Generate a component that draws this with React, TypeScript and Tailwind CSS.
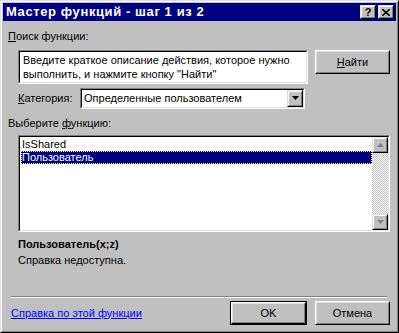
import React from 'react';

const font = { fontFamily: '"Liberation Sans", Arial, sans-serif' };

const Btn = ({ children, def = false, w = 'w-[75px]' }: { children: React.ReactNode; def?: boolean; w?: string }) => (
  <div className={`${w} h-[24px] ${def ? 'border border-black' : ''}`}>
    <div className="w-full h-full border border-t-white border-l-white border-r-black border-b-black bg-[#c0c0c0]">
      <div className="w-full h-full border border-t-[#dfdfdf] border-l-[#dfdfdf] border-r-[#808080] border-b-[#808080] flex items-center justify-center text-[11px] text-black">
        {children}
      </div>
    </div>
  </div>
);

const Sunken = ({ className, children }: { className: string; children?: React.ReactNode }) => (
  <div className={`${className} border border-t-[#808080] border-l-[#808080] border-r-white border-b-white`}>
    <div className="w-full h-full border border-t-black border-l-black border-r-[#dfdfdf] border-b-[#dfdfdf] bg-white overflow-hidden">
      {children}
    </div>
  </div>
);

const Raised = ({ className, children }: { className: string; children?: React.ReactNode }) => (
  <div className={`${className} border border-t-[#dfdfdf] border-l-[#dfdfdf] border-r-black border-b-black bg-[#c0c0c0]`}>
    <div className="w-full h-full border border-t-white border-l-white border-r-[#808080] border-b-[#808080] flex items-center justify-center">
      {children}
    </div>
  </div>
);

const Arrow = ({ up = false, color = 'black' }: { up?: boolean; color?: string }) => (
  <svg width="7" height="4" viewBox="0 0 7 4">
    <path d={up ? 'M3.5 0 L7 4 L0 4 Z' : 'M0 0 L7 0 L3.5 4 Z'} fill={color} />
  </svg>
);

export default function App() {
  return (
    <div style={font} className="w-[399px] h-[333px] bg-[#c0c0c0] border border-t-[#dfdfdf] border-l-[#dfdfdf] border-r-black border-b-black">
      <div className="w-full h-full border border-t-white border-l-white border-r-[#808080] border-b-[#808080] p-px flex flex-col">
        {/* title bar */}
        <div className="h-[18px] bg-[#000080] flex items-center pl-[3px] pr-[2px]">
          <span className="text-white font-bold text-[13px] tracking-[0.6px] flex-1">Мастер функций - шаг 1 из 2</span>
          <Raised className="w-[16px] h-[14px]">
            <span className="text-[11px] font-bold leading-none text-black">?</span>
          </Raised>
          <div className="w-[2px]" />
          <Raised className="w-[16px] h-[14px]">
            <svg width="8" height="7" viewBox="0 0 8 7">
              <path d="M0 0 L8 7 M8 0 L0 7" stroke="black" strokeWidth="1.6" />
            </svg>
          </Raised>
        </div>

        <div className="flex-1 flex flex-col text-[11px] text-black pl-[5px] pr-[6px]">
          <div className="mt-[9px] h-[13px] leading-[13px]">
            <span className="underline">П</span>оиск функции:
          </div>
          <div className="mt-[7px] flex pl-[10px]">
            <Sunken className="w-[290px] h-[34px]">
              <div className="px-[3px] pt-[1px] leading-[14px]">
                Введите краткое описание действия, которое нужно выполнить, и нажмите кнопку "Найти"
              </div>
            </Sunken>
            <div className="ml-[7px]">
              <Btn>
                <span className="underline">Н</span>айти
              </Btn>
            </div>
          </div>
          <div className="mt-[3px] flex items-center pl-[10px] h-[22px]">
            <span className="w-[62px]">
              <span className="underline">К</span>атегория:
            </span>
            <Sunken className="w-[225px] h-[21px]">
              <div className="flex h-full items-center">
                <span className="flex-1 pl-[2px]">Определенные пользователем</span>
                <Raised className="w-[16px] h-[17px]">
                  <Arrow />
                </Raised>
              </div>
            </Sunken>
          </div>
          <div className="mt-[8px] h-[13px] leading-[13px]">
            Выберите <span className="underline">ф</span>ункцию:
          </div>
          <div className="mt-[5px] pl-[10px]">
            <Sunken className="w-[372px] h-[97px]">
              <div className="flex h-full">
                <div className="flex-1 pl-px pt-[1px]">
                  <div className="h-[13px] leading-[13px] pl-px">IsShared</div>
                  <div className="h-[13px] leading-[13px] pl-px bg-[#000080] text-white outline-1 outline-dotted outline-[#ffff80] -outline-offset-1">
                    Пользователь
                  </div>
                </div>
                <div className="w-[16px] h-full flex flex-col bg-[repeating-conic-gradient(#c0c0c0_0%_25%,#ffffff_0%_50%)] bg-[length:2px_2px]">
                  <Raised className="w-[16px] h-[16px]">
                    <Arrow up color="#808080" />
                  </Raised>
                  <div className="flex-1" />
                  <Raised className="w-[16px] h-[16px]">
                    <Arrow color="#808080" />
                  </Raised>
                </div>
              </div>
            </Sunken>
          </div>
          <div className="mt-[5px] pl-[10px] font-bold h-[14px] leading-[14px]">Пользователь(x;z)</div>
          <div className="mt-[3px] pl-[10px] h-[13px] leading-[13px]">Справка недоступна.</div>
          <div className="flex-1" />
          <div className="mx-[3px] border-t border-t-[#808080] border-b border-b-white" />
          <div className="mt-[3px] mb-[5px] flex items-center">
            <span className="flex-1 pl-[3px] text-[#0000ff] underline">Справка по этой функции</span>
            <Btn def w="w-[77px]">OK</Btn>
            <div className="ml-[8px]">
              <Btn>Отмена</Btn>
            </div>
          </div>
        </div>
      </div>
    </div>
  );
}
